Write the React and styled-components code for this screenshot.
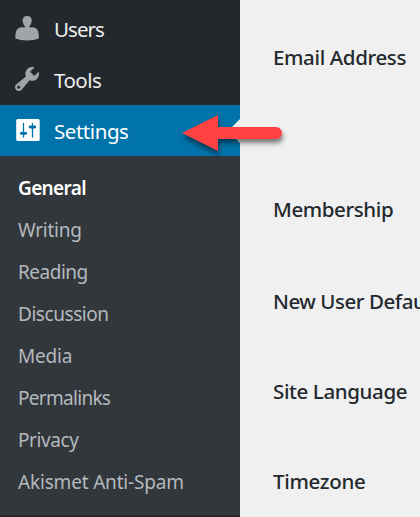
import React from 'react';
import styled, { createGlobalStyle } from 'styled-components';

const GlobalStyle = createGlobalStyle`
  * { box-sizing: border-box; }
  body { margin: 0; background: #f0f0f0; overflow: hidden; font-family: "Noto Sans", "Open Sans", sans-serif; }
`;

const Page = styled.div`
  display: flex;
  position: relative;
  width: 420px;
  height: 517px;
  overflow: hidden;
  background: #f0f0f0;
`;

const Sidebar = styled.nav`
  width: 240px;
  height: 517px;
  flex: none;
  background: #23282d;
  padding-top: 3px;
`;

const MenuItem = styled.a`
  position: relative;
  display: flex;
  align-items: center;
  height: 51px;
  padding-left: 12px;
  gap: 12px;
  color: ${(p) => (p.$active ? '#fff' : '#eee')};
  background: ${(p) => (p.$active ? '#0073aa' : 'transparent')};
  font-size: 20.5px;
  line-height: 49px;
  letter-spacing: ${(p) => p.$track}px;
  white-space: nowrap;
`;

const MenuText = styled.span`
  padding-top: 2px;
`;

const Icon = styled.svg`
  width: 30px;
  height: 30px;
  margin-bottom: 1px;
  flex: none;
  fill: ${(p) => (p.$active ? '#fff' : '#a0a5aa')};
`;

const Notch = styled.span`
  position: absolute;
  right: 0;
  top: 14px;
  border: 12px solid transparent;
  border-right-color: #f0f0f0;
  border-left-width: 0;
`;

const Submenu = styled.div`
  height: 359px;
  margin-bottom: 2px;
  padding: 11px 0 0 18px;
  background: #32373c;
`;

const SubItem = styled.a`
  display: block;
  height: 42px;
  line-height: 42px;
  font-size: 19px;
  font-weight: ${(p) => (p.$current ? 600 : 400)};
  color: ${(p) => (p.$current ? '#fff' : '#b4b9be')};
  letter-spacing: ${(p) => p.$track}px;
  white-space: nowrap;
`;

const Form = styled.main`
  flex: 1;
  min-width: 0;
  padding: 42px 0 0 33px;
`;

const Label = styled.div`
  height: ${(p) => p.$height}px;
  line-height: 30px;
  font-size: 20.5px;
  font-weight: 500;
  color: #23282d;
  letter-spacing: ${(p) => p.$track}px;
  white-space: nowrap;
`;

const Arrow = styled.svg`
  position: absolute;
  left: 170px;
  top: 100px;
  width: 130px;
  height: 66px;
  overflow: visible;
  filter: drop-shadow(1px 4px 2.5px rgba(0, 0, 0, 0.5));
`;

const UsersIcon = () => (
  <Icon viewBox="0 0 30 30">
    <path d="M15.1 3c3.2 0 4.8 2.100 4.600 4.900-.2 2.600-1.700 4.700-2.700 5.700.5.9 1.100 1.200 1.900.9 1.500-.4 3.400-.2 4.900.8 2.700 1.800 3.100 5 3.100 10.200-3.200 1.200-7.300 1.900-11.800 1.900s-8.500-.7-11.700-1.900c0-5.200.4-8.400 3.100-10.200 1.500-1 3.400-1.200 4.900-.8.8.3 1.400 0 1.900-.9-1-1-2.500-3.100-2.700-5.700C10.400 5.100 11.900 3 15.100 3z" />
  </Icon>
);

const ToolsIcon = () => (
  <Icon viewBox="0 0 20 20">
    <path
      fillRule="evenodd"
      d="M16.680 9.770c-1.340 1.340-3.300 1.670-4.950.99l-5.410 6.520c-.99.99-2.590.99-3.580 0s-.99-2.590 0-3.570l6.520-5.420c-.68-1.650-.35-3.610.99-4.950 1.280-1.280 3.120-1.620 4.720-1.060l-2.890 2.890 2.820 2.820 2.860-2.870c.53 1.580.18 3.390-1.080 4.650zM3.810 16.210c.4.39 1.040.39 1.430 0 .4-.4.4-1.040 0-1.430-.39-.4-1.030-.4-1.430 0-.39.39-.39 1.030 0 1.430z"
    />
  </Icon>
);

const SettingsIcon = () => (
  <Icon viewBox="0 0 30 30" $active>
    <rect x="4.200" y="4" width="23.500" height="22" rx="1.600" />
    <g fill="none" stroke="#0073aa" strokeLinecap="round">
      <path strokeWidth="1.300" d="M11.500 8.500V22M20.500 8.500V22" />
      <path strokeWidth="2.800" d="M9.200 18.300h4.600M18.200 12h4.600" />
    </g>
  </Icon>
);

const menu = [
  { text: 'Users', Glyph: UsersIcon, track: -0.95 },
  { text: 'Tools', Glyph: ToolsIcon, track: -0.5 },
  { text: 'Settings', Glyph: SettingsIcon, track: -0.45, active: true },
];

const submenu = [
  ['General', -0.65],
  ['Writing', -0.25],
  ['Reading', -0.5],
  ['Discussion', -0.45],
  ['Media', -0.2],
  ['Permalinks', -0.7],
  ['Privacy', -0.4],
  ['Akismet Anti-Spam', -0.18],
];

const labels = [
  ['Email Address', 152, -0.36],
  ['Membership', 92, -0.4],
  ['New User Default Role', 90, -0.45],
  ['Site Language', 90, -0.38],
  ['Timezone', 30, -0.32],
];

export default function App() {
  return (
    <>
      <GlobalStyle />
      <Page>
        <Sidebar>
          {menu.map(({ text, Glyph, track, active }) => (
            <MenuItem key={text} $active={active} $track={track}>
              <Glyph />
              <MenuText>{text}</MenuText>
              {active && <Notch />}
            </MenuItem>
          ))}
          <Submenu>
            {submenu.map(([text, track], i) => (
              <SubItem key={text} $current={i === 0} $track={track}>
                {text}
              </SubItem>
            ))}
          </Submenu>
        </Sidebar>
        <Form>
          {labels.map(([text, height, track]) => (
            <Label key={text} $height={height} $track={track}>
              {text}
            </Label>
          ))}
        </Form>
        <Arrow viewBox="0 0 130 66">
          <path fill="#ff4141" d="M12 33 L48 15 V27 H106 A6 6 0 0 1 106 39 H48 V51 Z" />
        </Arrow>
      </Page>
    </>
  );
}
